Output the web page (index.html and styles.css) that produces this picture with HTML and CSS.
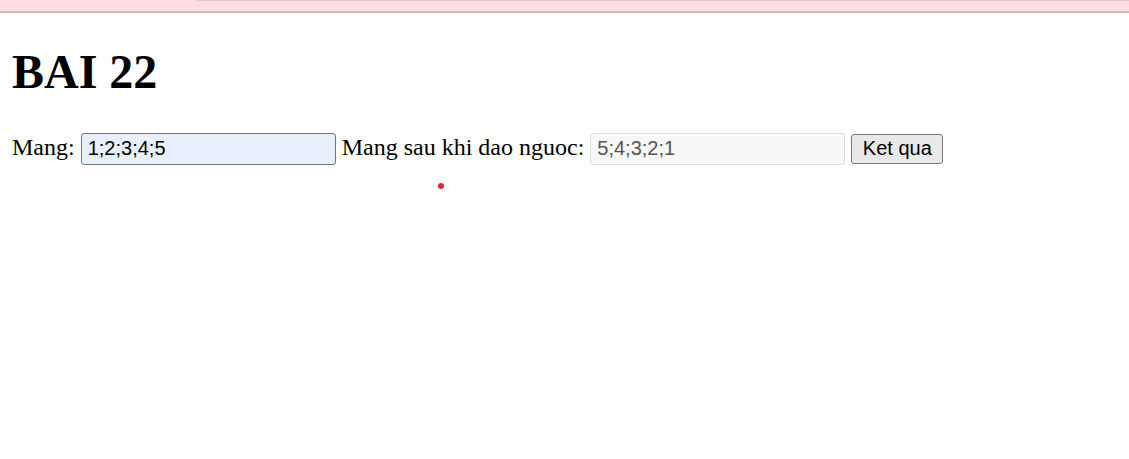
FILE: index.html
```html
<!DOCTYPE html>
<html lang="vi">
<head>
<meta charset="utf-8">
<title>BAI 22</title>
<link rel="stylesheet" href="styles.css">
</head>
<body>
<div class="topbar"><div class="tab"></div></div>
<main class="page">
  <h1 class="title">BAI 22</h1>
  <form class="row">
    <label class="lbl">Mang: <input class="field field-in" type="text" value="1;2;3;4;5"></label>
    <label class="lbl">Mang sau khi dao nguoc: <input class="field field-out" type="text" value="5;4;3;2;1" readonly></label>
    <button class="btn" type="button">Ket qua</button>
  </form>
  <div class="dot"></div>
</main>
</body>
</html>
```

FILE: styles.css
```css
html, body {
  margin: 0;
  padding: 0;
  background: #ffffff;
}
body {
  font-family: "Liberation Serif", "Times New Roman", serif;
  font-size: 24px;
  color: #000;
}
.topbar {
  height: 11px;
  background: #ffdde3;
  border-bottom: 2px solid #d5b9be;
  position: relative;
}
.tab {
  position: absolute;
  left: 197px;
  right: 0;
  top: 0;
  height: 1px;
  background: #e3c3c8;
  border-bottom-left-radius: 6px;
}
.page {
  padding: 0 12px;
  display: flow-root;
  position: relative;
  min-height: 400px;
}
.title {
  font-size: 48px;
  font-weight: bold;
  margin: 31px 0 32px;
  line-height: 55px;
}
.row {
  margin: 0;
  line-height: 32px;
}
.lbl {
  font-size: 24px;
}
.field {
  box-sizing: border-box;
  width: 255px;
  height: 32px;
  padding: 0 6px;
  font-family: "Liberation Sans", Arial, sans-serif;
  font-size: 20px;
  border-radius: 3px;
  outline: none;
}
.field-in {
  background: #e8f0fe;
  border: 1px solid #767676;
  color: #000;
}
.field-out {
  background: #f8f8f8;
  border: 1px solid #dcdcdc;
  color: #545454;
}
.btn {
  box-sizing: border-box;
  height: 30px;
  width: 92px;
  padding: 0 8px;
  font-family: "Liberation Sans", Arial, sans-serif;
  font-size: 20px;
  background: #e9e9e9;
  border: 1px solid #767676;
  border-radius: 3px;
  color: #000;
}
.dot {
  position: absolute;
  left: 438px;
  top: 170px;
  width: 6px;
  height: 6px;
  border-radius: 50%;
  background: #e8242b;
}
```
